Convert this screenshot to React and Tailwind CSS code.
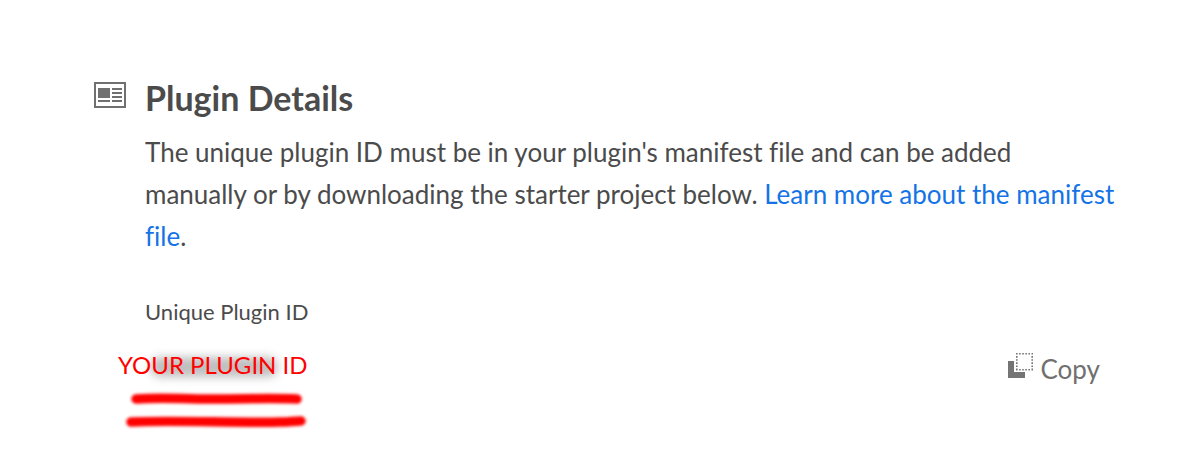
function DetailsIcon() {
  return (
    <svg className="mt-[5px] h-[26px] w-8 shrink-0" viewBox="0 0 32 26" fill="#707070" aria-hidden="true">
      <path fillRule="evenodd" d="M0 0h32v26H0zM2 2v22h28V2z" />
      <path d="M4 6h12v10H4zM4 18h12v2H4zM18 6h10v2H18zM18 10h10v2H18zM18 14h10v2H18zM18 18h10v2H18z" />
    </svg>
  );
}

function CopyIcon() {
  return (
    <svg className="mt-1 h-[26px] w-[26px] shrink-0" viewBox="0 0 26 26" aria-hidden="true">
      <path fill="#747474" d="M1 8h6v11h11v5.500q0 .5-.5.5H1.500q-.5 0-.5-.5z" />
      <path
        fill="none"
        stroke="#747474"
        strokeWidth="1.600"
        strokeDasharray="1.600 1.500"
        d="M9 .8h17M9 16.800h17M9.800 3.100v13M25.200 3.100v13"
      />
    </svg>
  );
}

function Underlines() {
  return (
    <svg className="block h-[54px] w-[200px]" viewBox="0 0 200 54" aria-hidden="true">
      <defs>
        <filter id="brush" filterUnits="userSpaceOnUse" x="0" y="0" width="200" height="54">
          <feGaussianBlur stdDeviation="1.600" />
        </filter>
      </defs>
      <g fill="none" stroke="#ff0000" strokeWidth="9.500" strokeLinecap="round" filter="url(#brush)">
        <path d="M18 14C45 12 60 14 95 14S150 13 179 14" />
        <path d="M13 37C50 35 120 38 162 37C172 37 175 36 183 36" />
      </g>
    </svg>
  );
}

export default function App() {
  return (
    <main className="bg-white pt-[77px] pr-[68px] pl-[94px] font-['Lato',sans-serif] text-[#4b4b4b] [font-variant-ligatures:no-common-ligatures]">
      <section className="flex gap-[19px]">
        <DetailsIcon />
        <div className="min-w-0 flex-1">
          <h2 className="mb-3 text-[34px] leading-[42px] font-bold">Plugin Details</h2>
          <p className="text-[26px] leading-[42px]">
            The unique plugin ID must be in your plugin's manifest file and can be added
            <br />
            manually or by downloading the starter project below.{' '}
            <a href="#manifest" className="text-[#1473e6]">Learn more about the manifest file</a>.
          </p>
          <h3 className="mt-[37px] text-[22px] leading-9">Unique Plugin ID</h3>
          <div className="mt-[15px] flex items-start justify-between pr-6">
            <div className="-ml-[27px] text-[24px] leading-10 text-[#ff0000]">
              <div className="relative">
                <span className="absolute top-3 left-8 h-5 w-32 rounded-full bg-black/25 blur-[5px]" aria-hidden="true" />
                <span className="relative">YOUR PLUGIN ID</span>
              </div>
              <Underlines />
            </div>
            <button type="button" className="mt-1 flex items-start gap-2 text-[26px] leading-10 text-[#707070]">
              <CopyIcon />
              Copy
            </button>
          </div>
        </div>
      </section>
    </main>
  );
}
